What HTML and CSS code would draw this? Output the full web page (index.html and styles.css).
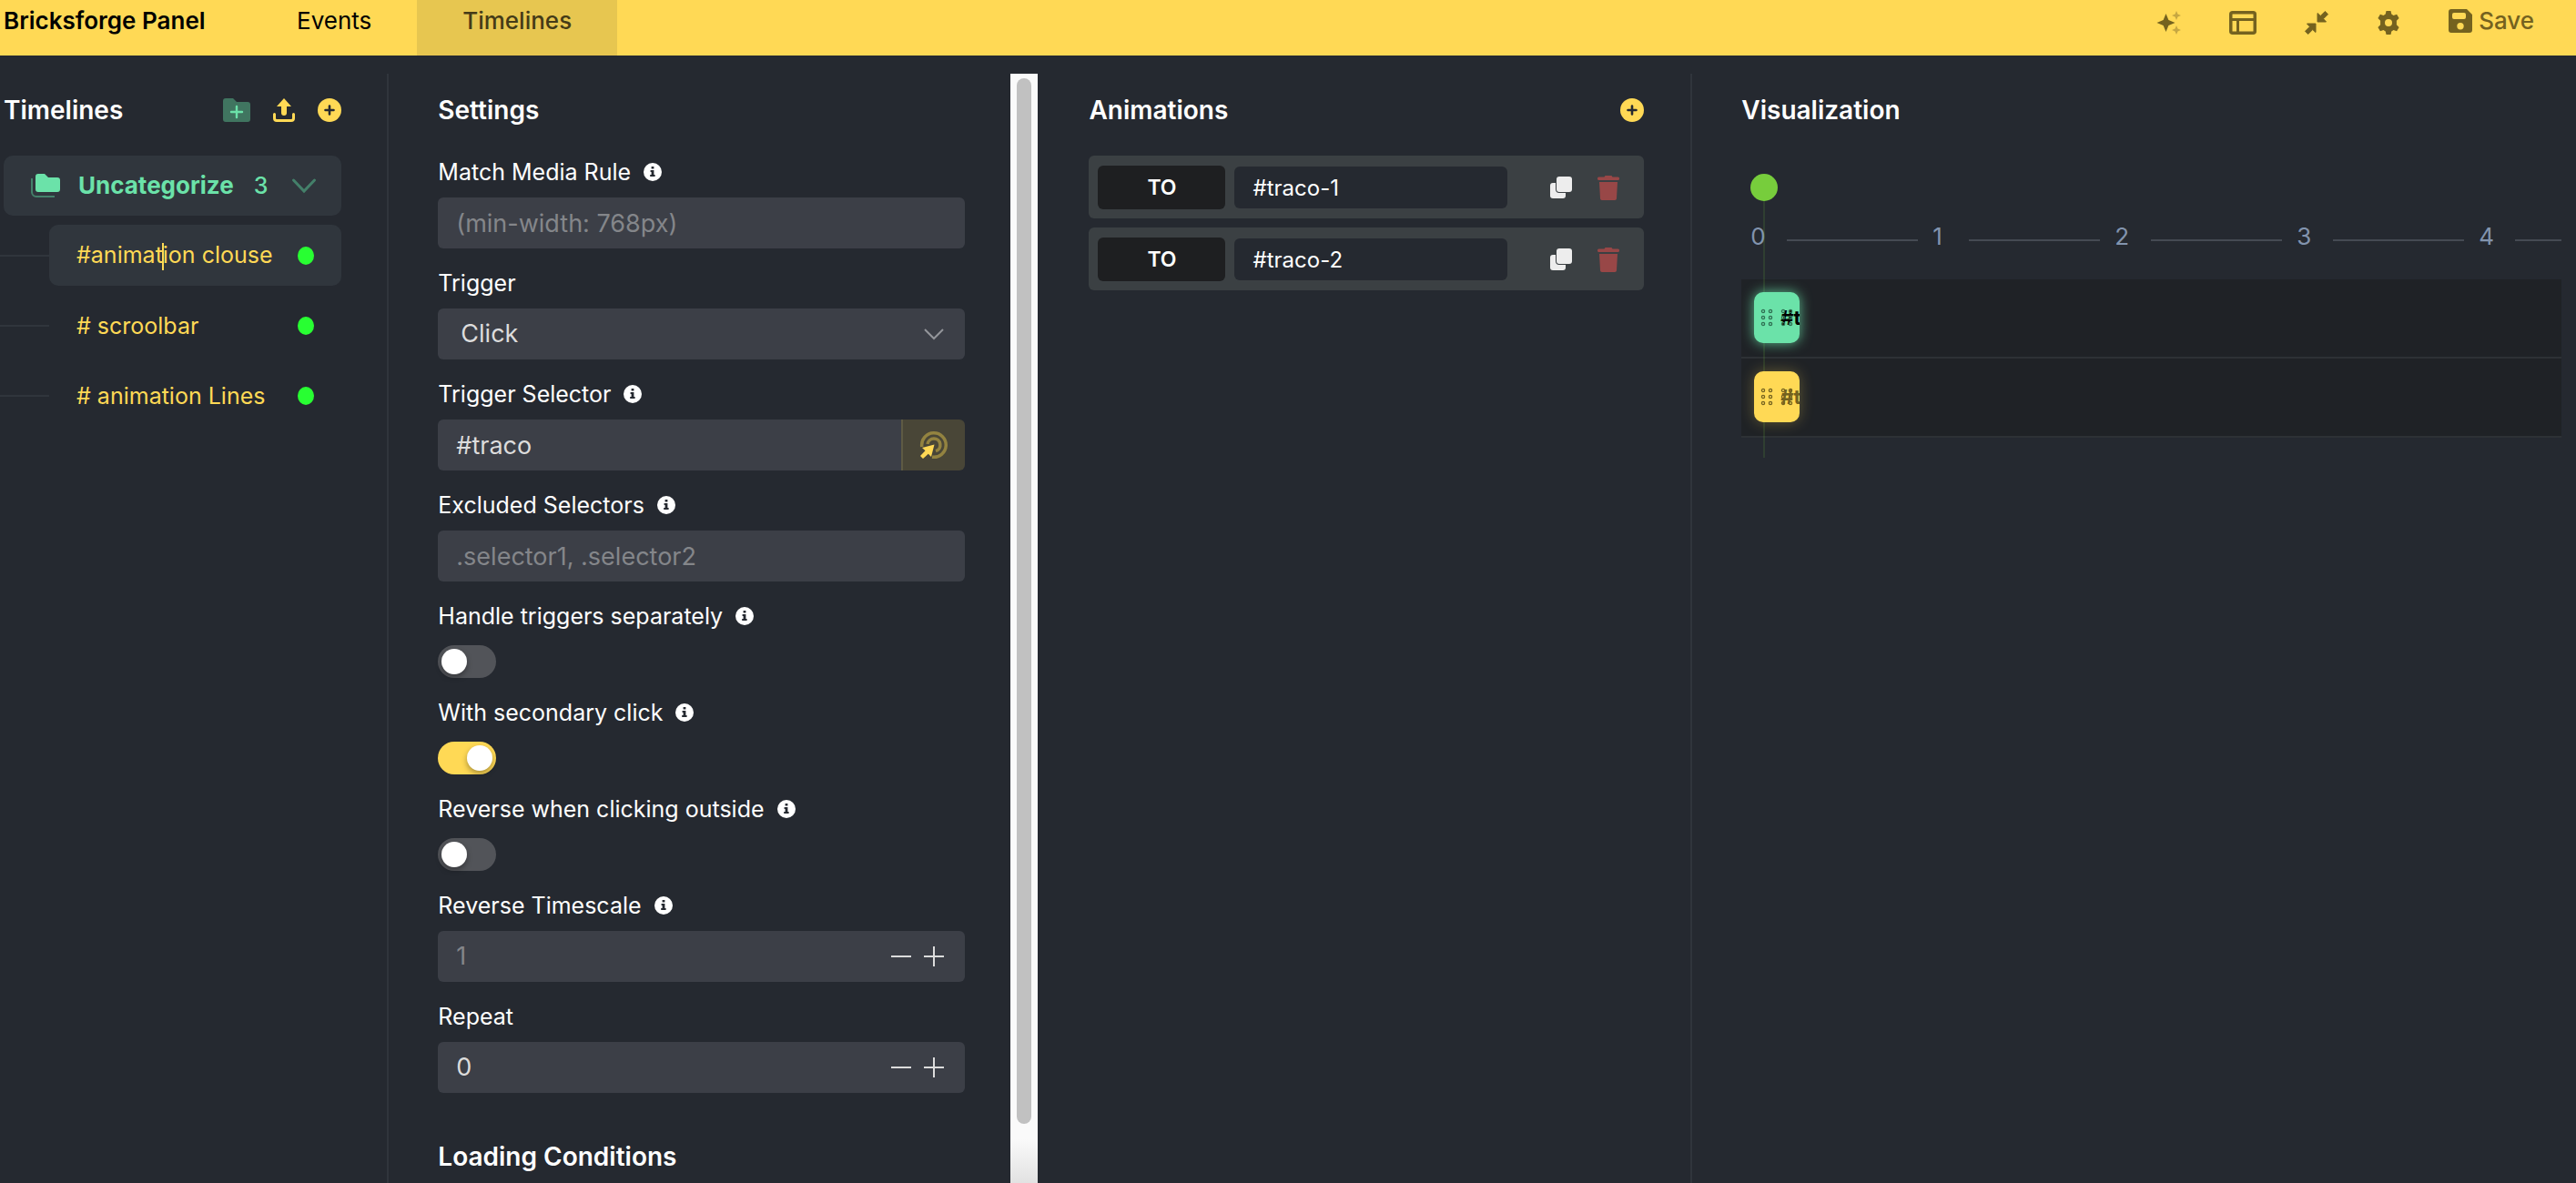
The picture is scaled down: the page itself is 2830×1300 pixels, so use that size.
FILE: index.html
```html
<!DOCTYPE html>
<html lang="en">
<head>
    <meta charset="UTF-8">
    <meta name="viewport" content="width=device-width, initial-scale=1.0">
    <title>Bricksforge Panel</title>
    <link rel="stylesheet" href="styles.css">
</head>
<body>
    <!-- shared icons -->
    <svg class="sprite" aria-hidden="true">
        <symbol id="icon-info" viewBox="0 0 20 20">
            <circle cx="10" cy="10" r="10" fill="#fff"/>
            <path d="M8.6 4h2.8v2.4H8.6zM7.6 8h3.8v5h1.2v2H7.2v-2h1.4v-3h-1z" fill="#252930"/>
        </symbol>
        <symbol id="icon-plus-circle" viewBox="0 0 26 26">
            <circle cx="13" cy="13" r="13" fill="#ffd955"/>
            <path d="M13 8.500v9M8.500 13h9" stroke="#252930" stroke-width="2.600" stroke-linecap="round"/>
        </symbol>
        <symbol id="icon-minus" viewBox="0 0 24 24">
            <path d="M1 12h22" stroke="#dcdcdc" stroke-width="2"/>
        </symbol>
        <symbol id="icon-plus" viewBox="0 0 24 24">
            <path d="M1 12h22M12 1v22" stroke="#dcdcdc" stroke-width="2"/>
        </symbol>
        <symbol id="icon-copy" viewBox="0 0 26 26">
            <rect x="1" y="8" width="17" height="17" rx="3" fill="#ededed"/>
            <rect x="8" y="1" width="17" height="17" rx="3" fill="#ededed" stroke="#3b4043" stroke-width="2" paint-order="stroke"/>
        </symbol>
        <symbol id="icon-trash" viewBox="0 0 24 28">
            <path d="M1.500 2.500h6L8.500 1h7l1 1.500h6c1 0 1.500.8 1.500 1.700S23.500 6 22.500 6h-21C.5 6 0 5 0 4.200s.5-1.700 1.500-1.700zM2 8h20l-1 18c-.1 1.200-.8 2-2 2H5c-1.200 0-1.900-.8-2-2z" fill="#984747"/>
        </symbol>
        <symbol id="icon-grip" viewBox="0 0 14 20">
            <g fill="none" stroke="currentColor" stroke-width="1.300">
                <circle cx="3" cy="3" r="1.600"/><circle cx="11" cy="3" r="1.600"/>
                <circle cx="3" cy="10" r="1.600"/><circle cx="11" cy="10" r="1.600"/>
                <circle cx="3" cy="17" r="1.600"/><circle cx="11" cy="17" r="1.600"/>
            </g>
        </symbol>
    </svg>

    <header class="topbar">
        <div class="brand">Bricksforge Panel</div>
        <nav class="tabs">
            <a class="tab" href="#events">Events</a>
            <a class="tab active" href="#timelines">Timelines</a>
        </nav>
        <div class="tools">
            <button class="tool" aria-label="Assistant">
                <svg width="26" height="26" viewBox="0 0 26 26">
                    <path d="M9.500 3l2.900 7.100 7.100 2.900-7.100 2.900L9.500 23l-2.900-7.100L-.5 13l7.100-2.900z" fill="#74621f"/>
                    <path d="M21 0l1.500 3.500L26 5l-3.500 1.500L21 10l-1.500-3.500L16 5l3.500-1.500zM21 16l1.500 3.500L26 21l-3.500 1.500L21 26l-1.500-3.500L16 21l3.500-1.500z" fill="#c6a742"/>
                </svg>
            </button>
            <button class="tool" aria-label="Layout">
                <svg width="30" height="26" viewBox="0 0 30 26" fill="none" stroke="#74621f" stroke-width="3.500">
                    <rect x="1.750" y="1.750" width="26.500" height="22.500" rx="2"/>
                    <path d="M2 9.500h26M9.500 9.500V24" stroke-width="3"/>
                </svg>
            </button>
            <button class="tool" aria-label="Collapse">
                <svg width="26" height="26" viewBox="0 0 26 26">
                    <path d="M14 2.500v9.500h9.500l-3-3.300 5-5L22.300.5l-5 5zM12 23.500V14H2.500l3 3.300-5 5 3.200 3.200 5-5z" fill="#74621f" stroke="#74621f" stroke-linejoin="round"/>
                </svg>
            </button>
            <button class="tool" aria-label="Preferences">
                <svg width="26" height="26" viewBox="0 0 26 26">
                    <path d="M10.500 0h5l.8 3.600 2.200 1.300 3.600-1.100 2.500 4.300-2.700 2.600v4.600l2.700 2.600-2.500 4.300-3.600-1.100-2.200 1.300-.8 3.600h-5l-.8-3.600-2.200-1.300-3.600 1.100-2.500-4.300 2.700-2.600v-4.600L1.400 8.100l2.500-4.300 3.600 1.100 2.200-1.300zM13 9a4 4 0 100 8 4 4 0 000-8z" fill="#74621f" fill-rule="evenodd"/>
                </svg>
            </button>
            <button class="tool save">
                <svg width="26" height="26" viewBox="0 0 26 26">
                    <path d="M3 0h17l6 6v17a3 3 0 01-3 3H3a3 3 0 01-3-3V3a3 3 0 013-3zM6 4a2 2 0 00-2 2v3a2 2 0 002 2h11a2 2 0 002-2V6a2 2 0 00-2-2zM13 15a3.700 3.700 0 100 7.400A3.700 3.700 0 0013 15z" fill="#74621f" fill-rule="evenodd"/>
                </svg>
                Save
            </button>
        </div>
    </header>

    <main class="panels">
        <section class="panel timelines">
            <div class="panel-head">
                <h2>Timelines</h2>
                <div class="head-actions">
                    <button aria-label="Add folder">
                        <svg width="30" height="26" viewBox="0 0 30 26">
                            <path d="M3 0h8l4 4h12a3 3 0 013 3v16a3 3 0 01-3 3H3a3 3 0 01-3-3V3a3 3 0 013-3z" fill="#407560"/>
                            <path d="M15 9v12M9 15h12" stroke="#6be2a9" stroke-width="2.400" stroke-linecap="round"/>
                        </svg>
                    </button>
                    <button aria-label="Import">
                        <svg width="24" height="26" viewBox="0 0 24 26">
                            <path d="M12 0l8 9h-5v7a3 3 0 01-6 0V9H4z" fill="#ffd955"/>
                            <path d="M1.500 17.500V22a2.500 2.500 0 002.500 2.500h16a2.500 2.500 0 002.500-2.500v-4.500" fill="none" stroke="#ffd955" stroke-width="3" stroke-linecap="round"/>
                        </svg>
                    </button>
                    <button aria-label="Add timeline"><svg width="26" height="26"><use href="#icon-plus-circle"/></svg></button>
                </div>
            </div>

            <button class="folder">
                <svg width="32" height="26" viewBox="0 0 32 26">
                    <path d="M1 5v15a5 5 0 005 5h20" fill="none" stroke="#44806a" stroke-width="2"/>
                    <path d="M8 0h7l4 4h10a3 3 0 013 3v10a3 3 0 01-3 3H8a3 3 0 01-3-3V3a3 3 0 013-3z" fill="#6be2a9"/>
                </svg>
                <span class="folder-name">Uncategorize</span>
                <span class="folder-count">3</span>
                <svg class="chevron" width="26" height="16" viewBox="0 0 26 16">
                    <path d="M1.500 2L13 14 24.500 2" fill="none" stroke="#44806a" stroke-width="3" stroke-linecap="round"/>
                </svg>
            </button>

            <ul class="timeline-list">
                <li><a class="timeline active" href="#t1"><span>#animat<i class="caret"></i>ion clouse</span><b class="status"></b></a></li>
                <li><a class="timeline" href="#t2"><span># scroolbar</span><b class="status"></b></a></li>
                <li><a class="timeline" href="#t3"><span># animation Lines</span><b class="status"></b></a></li>
            </ul>
        </section>

        <section class="panel settings">
            <form class="settings-form">
                <div class="panel-head"><h2>Settings</h2></div>

                <div class="field">
                    <label for="media">Match Media Rule <svg class="info"><use href="#icon-info"/></svg></label>
                    <input class="control" id="media" type="text" placeholder="(min-width: 768px)">
                </div>
                <div class="field">
                    <label for="trigger">Trigger</label>
                    <div class="select-wrap">
                        <select class="control" id="trigger"><option>Click</option></select>
                        <svg class="select-arrow" width="22" height="14" viewBox="0 0 22 14">
                            <path d="M1 2l10 10L21 2" fill="none" stroke="#93959a" stroke-width="2"/>
                        </svg>
                    </div>
                </div>
                <div class="field">
                    <label for="selector">Trigger Selector <svg class="info"><use href="#icon-info"/></svg></label>
                    <div class="picker">
                        <input class="control" id="selector" type="text" value="#traco">
                        <button class="pick" type="button" aria-label="Pick element">
                            <svg width="30" height="30" viewBox="0 0 30 30">
                                <g fill="none" stroke="#938340" stroke-width="3.500">
                                    <path d="M1.800 17A13.300 13.300 0 1113 28.200"/>
                                    <path d="M8 14A7 7 0 1117 21.700"/>
                                </g>
                                <path d="M15.500 14.500L12 28l-3.200-3.200L3 30 0 27l5.500-5.800L2 18z" fill="#ffd955"/>
                            </svg>
                        </button>
                    </div>
                </div>
                <div class="field">
                    <label for="excluded">Excluded Selectors <svg class="info"><use href="#icon-info"/></svg></label>
                    <input class="control" id="excluded" type="text" placeholder=".selector1, .selector2">
                </div>
                <div class="field">
                    <label for="separate">Handle triggers separately <svg class="info"><use href="#icon-info"/></svg></label>
                    <input class="switch" id="separate" type="checkbox">
                </div>
                <div class="field">
                    <label for="secondary">With secondary click <svg class="info"><use href="#icon-info"/></svg></label>
                    <input class="switch" id="secondary" type="checkbox" checked>
                </div>
                <div class="field">
                    <label for="outside">Reverse when clicking outside <svg class="info"><use href="#icon-info"/></svg></label>
                    <input class="switch" id="outside" type="checkbox">
                </div>
                <div class="field">
                    <label for="timescale">Reverse Timescale <svg class="info"><use href="#icon-info"/></svg></label>
                    <div class="number">
                        <input id="timescale" type="text" inputmode="numeric" placeholder="1">
                        <button type="button" aria-label="Decrease"><svg><use href="#icon-minus"/></svg></button>
                        <button type="button" aria-label="Increase"><svg><use href="#icon-plus"/></svg></button>
                    </div>
                </div>
                <div class="field">
                    <label for="repeat">Repeat</label>
                    <div class="number">
                        <input id="repeat" type="text" inputmode="numeric" value="0">
                        <button type="button" aria-label="Decrease"><svg><use href="#icon-minus"/></svg></button>
                        <button type="button" aria-label="Increase"><svg><use href="#icon-plus"/></svg></button>
                    </div>
                </div>

                <h2 class="subhead">Loading Conditions</h2>
            </form>
            <div class="scroll-track"><div class="scroll-thumb"></div></div>
        </section>

        <section class="panel animations">
            <div class="panel-head">
                <h2>Animations</h2>
                <div class="head-actions">
                    <button aria-label="Add animation"><svg width="26" height="26"><use href="#icon-plus-circle"/></svg></button>
                </div>
            </div>
            <div class="animation">
                <button class="method">TO</button>
                <input class="target" type="text" value="#traco-1" aria-label="Target">
                <div class="row-actions">
                    <button aria-label="Duplicate"><svg width="26" height="26"><use href="#icon-copy"/></svg></button>
                    <button aria-label="Delete"><svg width="24" height="28"><use href="#icon-trash"/></svg></button>
                </div>
            </div>
            <div class="animation">
                <button class="method">TO</button>
                <input class="target" type="text" value="#traco-2" aria-label="Target">
                <div class="row-actions">
                    <button aria-label="Duplicate"><svg width="26" height="26"><use href="#icon-copy"/></svg></button>
                    <button aria-label="Delete"><svg width="24" height="28"><use href="#icon-trash"/></svg></button>
                </div>
            </div>
        </section>

        <section class="panel visualization">
            <div class="panel-head"><h2>Visualization</h2></div>
            <div class="stage">
                <div class="playhead"></div>
                <div class="ruler">
                    <div class="tick">0</div>
                    <div class="tick">1</div>
                    <div class="tick">2</div>
                    <div class="tick">3</div>
                    <div class="tick">4</div>
                </div>
                <div class="track">
                    <div class="clip green">
                        <svg class="grip"><use href="#icon-grip"/></svg>
                        <span class="clip-label"><svg class="grip"><use href="#icon-grip"/></svg>#traco-1</span>
                    </div>
                </div>
                <div class="track">
                    <div class="clip yellow">
                        <svg class="grip"><use href="#icon-grip"/></svg>
                        <span class="clip-label"><svg class="grip"><use href="#icon-grip"/></svg>#traco-2</span>
                    </div>
                </div>
            </div>
        </section>
    </main>
</body>
</html>
```

FILE: styles.css
```css
* {
    box-sizing: border-box;
}

body {
    margin: 0;
    height: 100vh;
    display: flex;
    flex-direction: column;
    overflow: hidden;
    background: #252930;
    color: #fff;
    font-family: Inter, "Liberation Sans", sans-serif;
    font-size: 26px;
    line-height: 32px;
}

button,
input,
select {
    margin: 0;
    padding: 0;
    border: 0;
    outline: 0;
    background: none;
    color: inherit;
    font: inherit;
}

a {
    color: inherit;
    text-decoration: none;
}

svg {
    display: block;
    flex: none;
    overflow: visible;
}

h2 {
    margin: 0;
    font-size: 28px;
    font-weight: 600;
    line-height: 32px;
}

.sprite {
    position: absolute;
    width: 0;
    height: 0;
}

/* top bar */
.topbar {
    flex: none;
    display: flex;
    height: 61px;
    background: #ffd955;
    color: #000;
    line-height: 46px;
}

.brand {
    width: 276px;
    padding-left: 4px;
    font-weight: 600;
}

.tabs {
    display: flex;
}

.tab {
    padding: 0 50px;
}

.tab.active {
    background: #e7c650;
    color: #453b17;
    font-weight: 500;
}

.tools {
    display: flex;
    align-items: flex-start;
    gap: 53px;
    margin-left: auto;
    padding-right: 46px;
    color: #74621f;
}

.tool {
    display: flex;
    align-items: center;
    height: 50px;
}

.save {
    height: 46px;
    gap: 7px;
    font-weight: 500;
}

/* panels */
.panels {
    flex: 1;
    min-height: 0;
    display: flex;
    padding-top: 20px;
}

.panel {
    padding-top: 24px;
}

.panel-head {
    display: flex;
    align-items: center;
    justify-content: space-between;
    margin-bottom: 34px;
}

.head-actions {
    display: flex;
    align-items: center;
    gap: 25px;
}

/* timelines */
.timelines {
    width: 15.1%;
    padding-left: 4px;
    padding-right: 50px;
    border-right: 2px solid #30353c;
}

.folder {
    display: flex;
    align-items: center;
    width: 100%;
    height: 66px;
    padding: 0 28px 0 30px;
    border-radius: 10px;
    background: #30363d;
    color: #6be2a9;
}

.folder-name {
    margin-left: 20px;
    font-weight: 700;
}

.folder-count {
    margin-left: 22px;
    font-size: 25px;
    font-weight: 500;
}

.chevron {
    margin-left: auto;
}

.timeline-list {
    margin: 10px 0 0 -4px;
    padding: 0;
    list-style: none;
}

.timeline-list li {
    display: flex;
    align-items: center;
    margin-bottom: 10px;
}

.timeline-list li::before {
    content: "";
    width: 54px;
    height: 2px;
    background: #30353c;
}

.timeline {
    flex: 1;
    display: flex;
    align-items: center;
    justify-content: space-between;
    height: 67px;
    padding: 0 30px;
    border-radius: 10px;
    color: #ffd955;
    font-size: 25px;
}

.timeline.active {
    background: #30363d;
}

.caret {
    display: inline-block;
    width: 2px;
    height: 30px;
    margin: 0 -1px;
    background: #ffd955;
    vertical-align: middle;
}

.status {
    width: 18px;
    height: 20px;
    border-radius: 50%;
    background: #28ff32;
}

/* settings */
.settings {
    display: flex;
    width: 25.2%;
    padding-top: 0;
}

.settings-form {
    flex: 1;
    padding: 24px 50px 0 54px;
}

.settings-form .panel-head {
    margin-bottom: 36px;
}

.field {
    margin-bottom: 22px;
}

.field label {
    display: flex;
    align-items: center;
    gap: 14px;
    margin-bottom: 12px;
    font-size: 25px;
}

.info {
    width: 20px;
    height: 20px;
}

.control,
.number {
    display: block;
    width: 100%;
    height: 56px;
    padding: 0 20px;
    border-radius: 6px;
    background: #3c3f47;
    color: #dcdcdc;
    font-size: 27px;
}

::placeholder {
    color: #84868a;
    opacity: 1;
}

.select-wrap {
    position: relative;
}

.select-wrap .control {
    appearance: none;
    padding-left: 25px;
}

.select-arrow {
    position: absolute;
    right: 23px;
    top: 21px;
}

.picker {
    display: flex;
}

.picker .control {
    flex: 1;
    min-width: 0;
    border-radius: 6px 0 0 6px;
}

.pick {
    display: flex;
    align-items: center;
    justify-content: center;
    width: 70px;
    border-left: 2px solid #5e5a44;
    border-radius: 0 6px 6px 0;
    background: #494637;
}

.switch {
    appearance: none;
    display: block;
    width: 64px;
    height: 36px;
    margin-top: 16px;
    padding: 4px;
    border-radius: 18px;
    background: #525459;
}

.switch::before {
    content: "";
    display: block;
    width: 28px;
    height: 28px;
    border-radius: 50%;
    background: #fff;
    box-shadow: 0 3px 6px rgba(0, 0, 0, 0.35);
}

.switch:checked {
    padding-left: 32px;
    background: #ffd955;
}

.number {
    display: flex;
    align-items: center;
    gap: 12px;
    padding-right: 22px;
}

.number input {
    flex: 1;
    min-width: 0;
}

.number svg {
    width: 24px;
    height: 24px;
}

.subhead {
    margin-top: 54px;
}

.scroll-track {
    width: 30px;
    padding: 5px 7px;
    background: linear-gradient(#fafafa 96%, #e2e2e2);
}

.scroll-thumb {
    height: 95%;
    border-radius: 8px;
    background: #c1c1c1;
}

/* animations */
.animations {
    width: 25.4%;
    padding-left: 56px;
    padding-right: 51px;
    border-right: 2px solid #30353c;
}

.animation {
    display: flex;
    align-items: center;
    gap: 10px;
    height: 69px;
    margin-bottom: 10px;
    padding: 0 27px 0 10px;
    border-radius: 6px;
    background: #3b4043;
}

.method {
    width: 140px;
    height: 48px;
    border-radius: 6px;
    background: #1e1f21;
    font-size: 23px;
    font-weight: 600;
}

.target {
    flex: 1;
    min-width: 0;
    max-width: 300px;
    height: 46px;
    padding: 2px 20px 0;
    border-radius: 6px;
    background: #252930;
    font-size: 24px;
}

.row-actions {
    display: flex;
    align-items: center;
    gap: 27px;
    margin-left: auto;
}

/* visualization */
.visualization {
    flex: 1;
    min-width: 0;
    padding-left: 54px;
    padding-right: 16px;
}

.stage {
    position: relative;
    padding-top: 73px;
    overflow: hidden;
    height: 340px;
}

.playhead {
    position: absolute;
    top: 20px;
    left: 10px;
    width: 30px;
    height: 30px;
    border-radius: 50%;
    background: #77cd3c;
}

.playhead::after {
    content: "";
    position: absolute;
    top: 30px;
    left: 14px;
    width: 2px;
    height: 282px;
    background: rgba(119, 205, 60, 0.13);
}

.ruler {
    display: flex;
    height: 63px;
    padding-left: 10px;
    color: #8294ae;
}

.tick {
    flex: none;
    display: flex;
    width: 200px;
}

.tick::after {
    content: "";
    width: 144px;
    height: 2px;
    margin: 19px 16px 0 auto;
    background: #454a53;
}

.track {
    height: 87px;
    padding: 14px;
    border-bottom: 2px solid #2d3135;
    background: #1f2226;
}

.clip {
    position: relative;
    display: flex;
    align-items: center;
    width: 50px;
    height: 56px;
    padding-left: 7px;
    border-radius: 10px;
}

.grip {
    width: 14px;
    height: 20px;
}

.clip-label {
    position: relative;
    flex: 1;
    min-width: 0;
    margin-left: 8px;
    overflow: hidden;
    font-size: 22px;
    font-weight: 700;
    white-space: nowrap;
}

/* second handle sits under the text */
.clip-label .grip {
    position: absolute;
    top: 6px;
    left: 0;
}

.green {
    background: #6be2a9;
    box-shadow: 0 0 14px rgba(107, 226, 169, 0.8);
    color: #000;
}

.yellow {
    background: #ffd955;
    box-shadow: 0 0 16px rgba(255, 217, 85, 0.3);
    color: #74621f;
}

.green .grip {
    color: #2f6f52;
}

.yellow .grip {
    color: #74621f;
}
```
